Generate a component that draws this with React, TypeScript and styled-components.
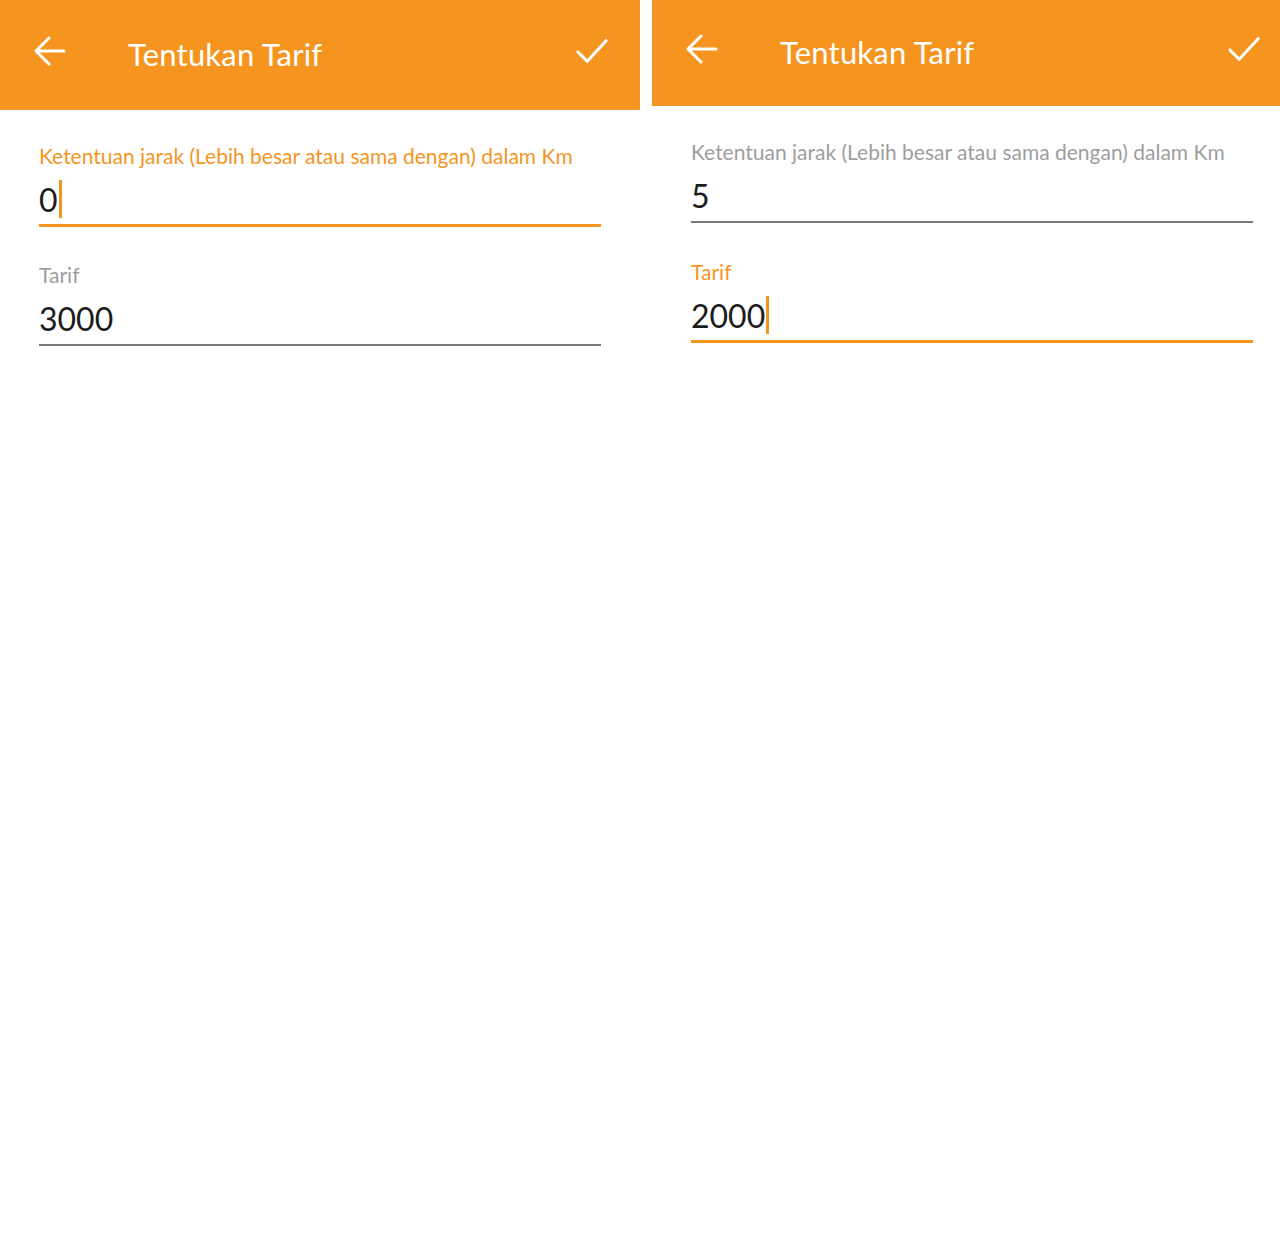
import React, { FC } from 'react';
import styled, { createGlobalStyle } from 'styled-components';

const ORANGE = '#f5951f';

const GlobalStyle = createGlobalStyle`
  html, body {
    margin: 0;
    padding: 0;
    background: #ffffff;
  }
  body {
    font-family: Lato, 'Open Sans', sans-serif;
  }
`;

const Page = styled.div`
  display: flex;
  gap: 12px;
  width: 1280px;
  height: 1253px;
  background: #ffffff;
  overflow: hidden;
`;

// each phone screen is laid out at 640px and the right one is cropped
const Screen = styled.div<{ $width: number }>`
  flex: 0 0 ${(p) => p.$width}px;
  width: ${(p) => p.$width}px;
  overflow: hidden;
`;

const Inner = styled.div`
  width: 640px;
`;

const AppBar = styled.div<{ $height: number }>`
  display: flex;
  align-items: center;
  height: ${(p) => p.$height}px;
  background: ${ORANGE};
  color: #ffffff;
  padding: 0 32px 8px 34px;
  box-sizing: border-box;
`;

const IconButton = styled.div`
  display: flex;
  width: 32px;
  height: 32px;
  align-items: center;
  justify-content: center;
`;

const Title = styled.div`
  flex: 1;
  margin: 6px 0 0 62px;
  font-size: 31px;
  letter-spacing: 0.2px;
`;

const Form = styled.div`
  display: flex;
  flex-direction: column;
  gap: 34px;
  padding: 32px 39px 0;
`;

const Field = styled.div`
  display: flex;
  flex-direction: column;
`;

const Label = styled.div<{ $active?: boolean }>`
  font-size: 21px;
  line-height: 28px;
  color: ${(p) => (p.$active ? ORANGE : '#9e9e9e')};
`;

const Value = styled.div<{ $active?: boolean }>`
  display: flex;
  align-items: center;
  height: 57px;
  font-size: 32px;
  color: #1c1c1c;
  border-bottom: ${(p) => (p.$active ? `3px solid ${ORANGE}` : '2px solid #7a7a7a')};
  margin-bottom: ${(p) => (p.$active ? 0 : 1)}px;
  box-sizing: border-box;
  padding-top: 4px;
`;

const Caret = styled.span`
  display: inline-block;
  width: 3px;
  height: 38px;
  background: ${ORANGE};
  margin-left: 1px;
`;

const BackIcon = () => (
  <svg width="32" height="32" viewBox="0 0 32 32" fill="none" stroke="#fff" strokeWidth="3" strokeLinecap="round" strokeLinejoin="round">
    <path d="M30 16H3M15 3L2 16l13 13" />
  </svg>
);

const CheckIcon = () => (
  <svg width="34" height="28" viewBox="0 0 34 28" fill="none" stroke="#fff" strokeWidth="3.2" strokeLinecap="round" strokeLinejoin="round">
    <path d="M2 15l10 10L32 3" />
  </svg>
);

interface FieldData {
  label: string;
  value: string;
  active: boolean;
}

interface TariffScreenProps {
  width: number;
  barHeight: number;
  fields: FieldData[];
}

const TariffScreen: FC<TariffScreenProps> = ({ width, barHeight, fields }) => (
  <Screen $width={width}>
    <Inner>
      <AppBar $height={barHeight}>
        <IconButton>
          <BackIcon />
        </IconButton>
        <Title>Tentukan Tarif</Title>
        <IconButton>
          <CheckIcon />
        </IconButton>
      </AppBar>
      <Form>
        {fields.map((f) => (
          <Field key={f.label}>
            <Label $active={f.active}>{f.label}</Label>
            <Value $active={f.active}>
              {f.value}
              {f.active && <Caret />}
            </Value>
          </Field>
        ))}
      </Form>
    </Inner>
  </Screen>
);

const DISTANCE = 'Ketentuan jarak (Lebih besar atau sama dengan) dalam Km';

const App: FC = () => (
  <>
    <GlobalStyle />
    <Page>
      <TariffScreen
        width={640}
        barHeight={110}
        fields={[
          { label: DISTANCE, value: '0', active: true },
          { label: 'Tarif', value: '3000', active: false },
        ]}
      />
      <TariffScreen
        width={628}
        barHeight={106}
        fields={[
          { label: DISTANCE, value: '5', active: false },
          { label: 'Tarif', value: '2000', active: true },
        ]}
      />
    </Page>
  </>
);

export default App;
